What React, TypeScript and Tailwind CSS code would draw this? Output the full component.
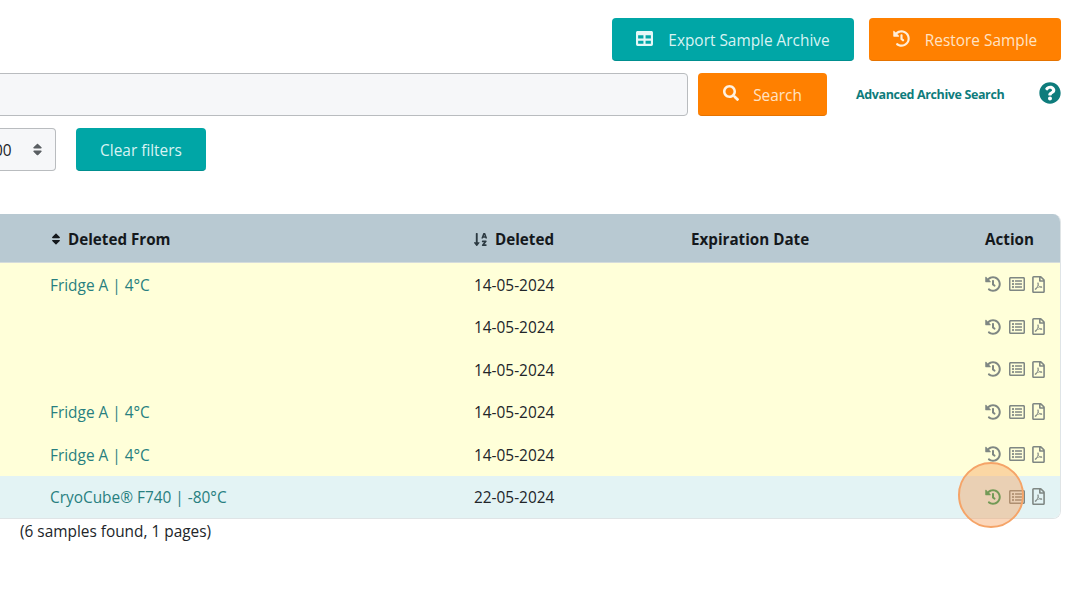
import { FaHistory, FaTable, FaSearch, FaQuestionCircle, FaSort, FaSortAlphaDown, FaRegFilePdf, FaRegListAlt } from "react-icons/fa";

const rows = [
  { from: "Fridge A | 4°C", date: "14-05-2024" },
  { from: "", date: "14-05-2024" },
  { from: "", date: "14-05-2024" },
  { from: "Fridge A | 4°C", date: "14-05-2024" },
  { from: "Fridge A | 4°C", date: "14-05-2024" },
  { from: "CryoCube® F740 | -80°C", date: "22-05-2024", last: true },
];

export default function App() {
  return (
    <div className="relative w-[1076px] h-[594px] overflow-hidden bg-white text-[#212529] font-['Open_Sans','Noto_Sans',sans-serif] text-[15.4px]">
      <div className="flex flex-col pt-[18px] pr-[15px]">
        <div className="flex justify-end gap-[15px]">
          <button className="flex items-center justify-center gap-[15px] w-[242px] h-[43px] pt-[3px] rounded bg-[#00a6a6] text-[#d8f3f3] border-b border-[#008f8f]">
            <FaTable className="text-[17px] text-[#e4f7f7] -mt-[4px]" />
            <span>Export Sample Archive</span>
          </button>
          <button className="flex items-center justify-center gap-[15px] w-[192px] h-[43px] pt-[3px] rounded bg-[#ff8000] text-[#ffe3c4] border-b border-[#e57300]">
            <FaHistory className="text-[17px] text-[#ffeeda] -mt-[4px]" />
            <span>Restore Sample</span>
          </button>
        </div>
        <div className="flex items-center mt-[12px]">
          <div className="-ml-[10px] w-[698px] h-[43px] rounded border border-[#b9bcbf] bg-[#f6f7f9]" />
          <button className="flex items-center justify-center gap-[14px] ml-[10px] w-[129px] h-[43px] pt-[3px] rounded bg-[#ff8000] text-[#ffe3c4] border-b border-[#e57300]">
            <FaSearch className="text-[16px] text-[#fff2e2] -mt-[5px]" />
            <span>Search</span>
          </button>
          <a className="ml-[29px] mt-[2px] w-[148px] text-[12.5px] font-bold text-[#0e7c7c] whitespace-nowrap tracking-[-0.38px]">Advanced Archive Search</a>
          <FaQuestionCircle className="ml-[35px] -mt-[4px] text-[22px] text-[#0e7c7c]" />
        </div>
        <div className="flex items-center mt-[12px]">
          <div className="flex items-center justify-between w-[56px] h-[43px] pr-[10px] rounded-r border border-l-0 border-[#b9bcbf] bg-[#f6f7f9] overflow-hidden">
            <span className="-ml-[6px] mt-[2px]">00</span>
            <FaSort className="text-[15px] text-[#5a5f63]" />
          </div>
          <button className="ml-[20px] w-[130px] h-[43px] pt-[3px] rounded bg-[#00a6a6] text-[#d8f3f3] border-b border-[#008f8f]">Clear filters</button>
        </div>
        <div className="mt-[43px] rounded-r-lg border-r border-b border-[#dfe4e6] overflow-hidden">
          <div className="grid grid-cols-[473px_218px_294px_1fr] items-center h-[49px] pt-[3px] bg-[#b8c9d2] font-bold text-[15.2px] text-[#14181c] border-b border-[#d5dcdc]">
            <div className="flex items-center gap-[9px] pl-[50px]"><FaSort className="text-[14px] -ml-px mr-[-5px]" /><span className="ml-[1px]">Deleted From</span></div>
            <div className="flex items-center gap-[7px]"><FaSortAlphaDown className="text-[15px] text-[#2c3a42]" />Deleted</div>
            <div>Expiration Date</div>
            <div>Action</div>
          </div>
          {rows.map((r, i) => (
            <div key={i} className={`grid grid-cols-[473px_218px_294px_1fr] items-center h-[42.5px] pt-[2px] ${r.last ? "bg-[#e3f3f4]" : "bg-[#ffffd9]"}`}>
              <div className="pl-[50px] text-[#287f80]">{r.from}</div>
              <div className="pl-[1px]">{r.date}</div>
              <div />
              <div className="flex items-center gap-[7.5px] text-[#7f8783] -mt-[2px]">
                <FaHistory className={`text-[16px] ${r.last ? "text-[#1d9a58]" : ""}`} />
                <FaRegListAlt className="text-[16px]" />
                <FaRegFilePdf className="text-[17px] -ml-[2px]" />
              </div>
            </div>
          ))}
        </div>
        <div className="mt-[1px] pl-[20px]">(6 samples found, 1 pages)</div>
      </div>
      <div className="absolute left-[958px] top-[462px] w-[66px] h-[66px] rounded-full border-2 border-[#f5a468] bg-[#f59a5566]" />
    </div>
  );
}
